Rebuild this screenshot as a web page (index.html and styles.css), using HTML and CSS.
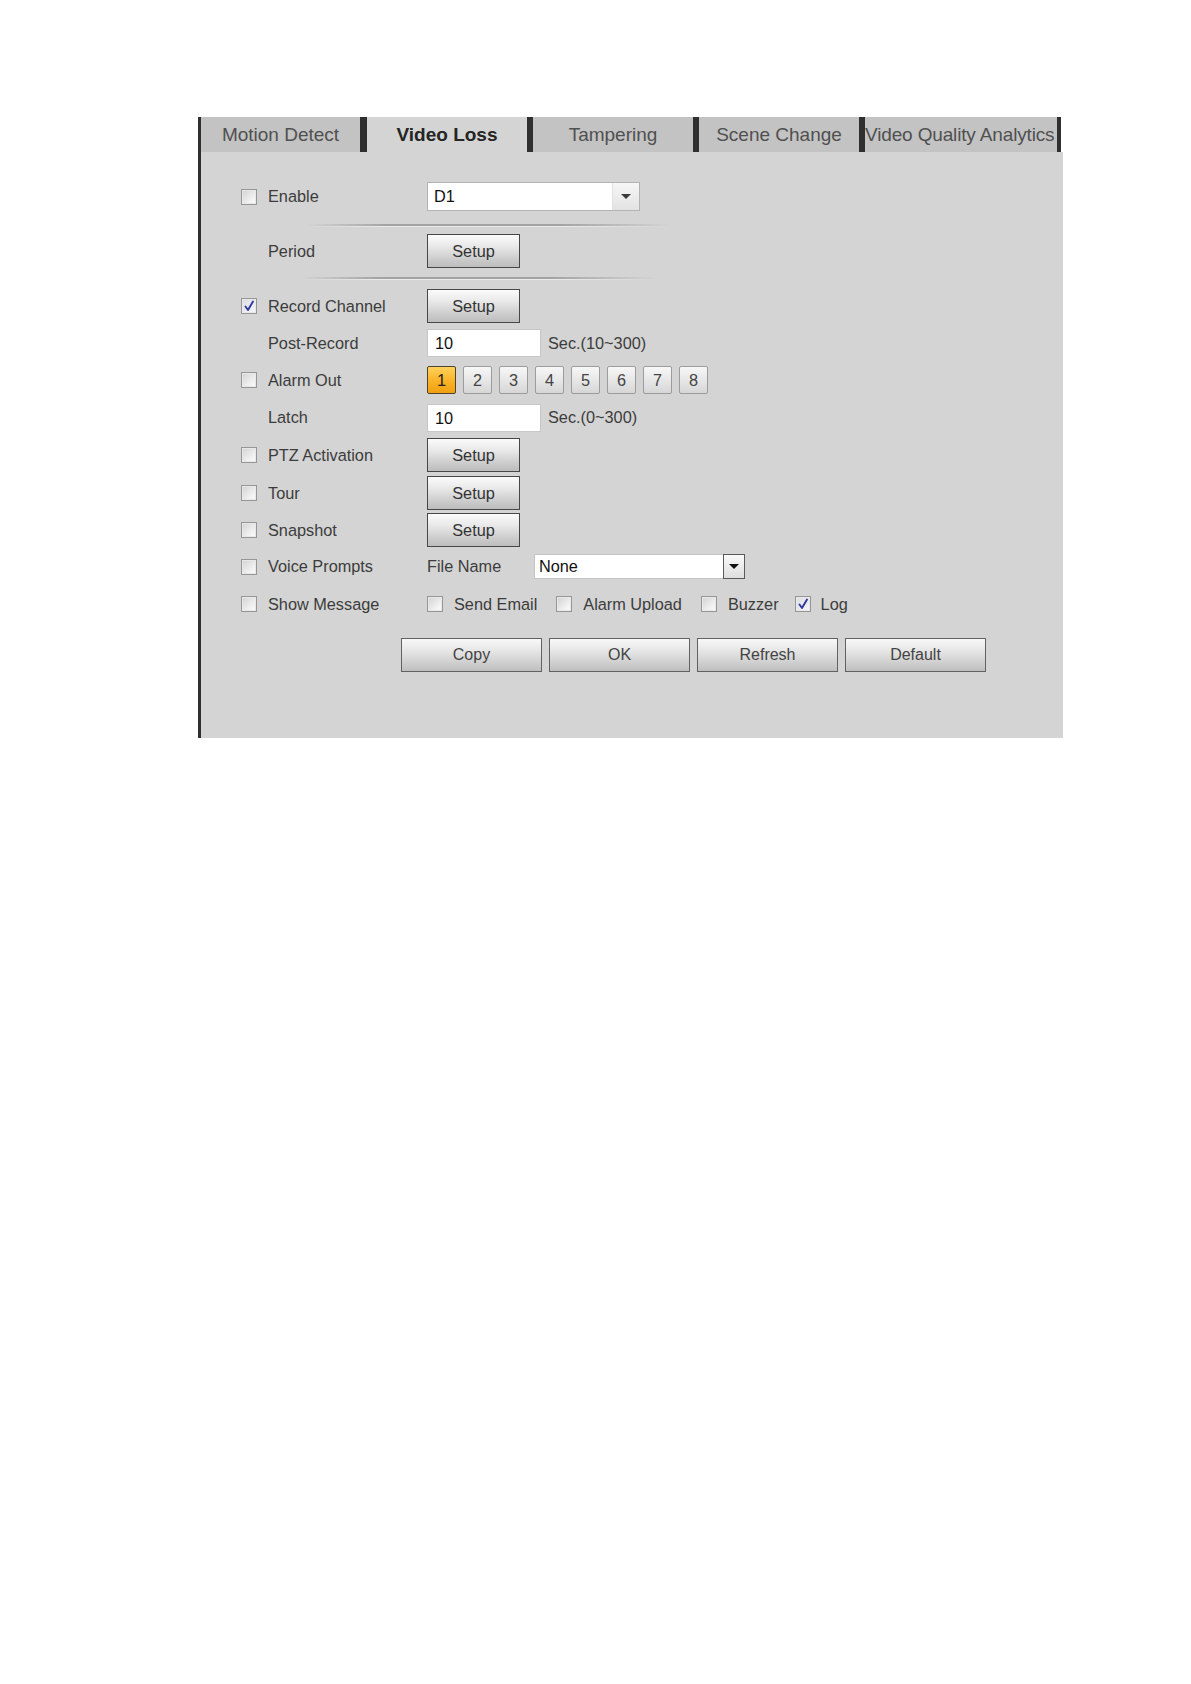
FILE: index.html
```html
<!DOCTYPE html>
<html>
<head>
<meta charset="utf-8">
<link rel="stylesheet" href="styles.css">
</head>
<body>
<div class="window">
  <div class="tabs">
    <div class="tab first">Motion Detect</div>
    <div class="tab active">Video Loss</div>
    <div class="tab">Tampering</div>
    <div class="tab">Scene Change</div>
    <div class="tab last">Video Quality Analytics</div>
  </div>
  <div class="panel">
    <div class="row r-enable">
      <div class="chk-cell"><span class="chk"></span></div>
      <div class="label">Enable</div>
      <div class="select d1"><span class="sel-text">D1</span><span class="sel-arrow"><span class="tri"></span></span></div>
    </div>
    <div class="sep sep1"></div>
    <div class="row r-btn">
      <div class="chk-cell"></div>
      <div class="label">Period</div>
      <button class="setup">Setup</button>
    </div>
    <div class="sep sep2"></div>
    <div class="row r-btn">
      <div class="chk-cell"><span class="chk checked"><svg viewBox="0 0 14 14" width="14" height="14"><path d="M3.5 7.5 L6 11 L11 2.5" fill="none" stroke="#2e3a9e" stroke-width="1.9" stroke-linecap="round" stroke-linejoin="round"/></svg></span></div>
      <div class="label">Record Channel</div>
      <button class="setup">Setup</button>
    </div>
    <div class="row r-post">
      <div class="chk-cell"></div>
      <div class="label">Post-Record</div>
      <div class="input">10</div>
      <span class="hint">Sec.(10~300)</span>
    </div>
    <div class="row r-alarm">
      <div class="chk-cell"><span class="chk"></span></div>
      <div class="label">Alarm Out</div>
      <div class="nums">
        <span class="num on">1</span>
        <span class="num">2</span>
        <span class="num">3</span>
        <span class="num">4</span>
        <span class="num">5</span>
        <span class="num">6</span>
        <span class="num">7</span>
        <span class="num">8</span>
      </div>
    </div>
    <div class="row r-latch">
      <div class="chk-cell"></div>
      <div class="label">Latch</div>
      <div class="input">10</div>
      <span class="hint">Sec.(0~300)</span>
    </div>
    <div class="row r-btn">
      <div class="chk-cell"><span class="chk"></span></div>
      <div class="label">PTZ Activation</div>
      <button class="setup">Setup</button>
    </div>
    <div class="row r-btn r-tour">
      <div class="chk-cell"><span class="chk"></span></div>
      <div class="label">Tour</div>
      <button class="setup">Setup</button>
    </div>
    <div class="row r-btn r-snap">
      <div class="chk-cell"><span class="chk"></span></div>
      <div class="label">Snapshot</div>
      <button class="setup">Setup</button>
    </div>
    <div class="row r-voice">
      <div class="chk-cell"><span class="chk"></span></div>
      <div class="label">Voice Prompts</div>
      <span class="fname">File Name</span>
      <div class="select none"><span class="sel-text">None</span><span class="sel-arrow dark"><span class="tri"></span></span></div>
    </div>
    <div class="row r-show">
      <div class="chk-cell"><span class="chk"></span></div>
      <div class="label">Show Message</div>
      <div class="opts">
        <span class="opt"><span class="chk"></span>Send Email</span>
        <span class="opt"><span class="chk"></span>Alarm Upload</span>
        <span class="opt"><span class="chk"></span>Buzzer</span>
        <span class="opt"><span class="chk checked"><svg viewBox="0 0 14 14" width="14" height="14"><path d="M3.5 7.5 L6 11 L11 2.5" fill="none" stroke="#2e3a9e" stroke-width="1.9" stroke-linecap="round" stroke-linejoin="round"/></svg></span>Log</span>
      </div>
    </div>
    <div class="actions">
      <button class="act">Copy</button>
      <button class="act">OK</button>
      <button class="act">Refresh</button>
      <button class="act">Default</button>
    </div>
  </div>
</div>
</body>
</html>
```

FILE: styles.css
```css
* { box-sizing: border-box; }
html, body { margin: 0; padding: 0; background: #ffffff; }
body {
  font-family: "Liberation Sans", Arial, sans-serif;
  color: #3c3c3c;
  height: 1684px;
}
.window {
  margin: 117px 0 0 198px;
  width: 865px;
}
.tabs {
  display: flex;
  height: 35px;
  border-left: 3px solid #2f2f2f;
}
.tab {
  width: 166px;
  height: 35px;
  line-height: 35px;
  text-align: center;
  font-size: 19px;
  color: #505050;
  background: #c3c3c3;
  border-left: 6px solid #2f2f2f;
  white-space: nowrap;
  overflow: hidden;
}
.tab.first { width: 159px; border-left: none; }
.tab.active {
  width: 167px;
  border-left-width: 7px;
  background: #d4d4d4;
  color: #252525;
  font-weight: bold;
}
.tab.last {
  width: 202px;
  border-right: 4px solid #2f2f2f;
  text-align: left;
  padding-left: 0;
  letter-spacing: -0.15px;
}
.panel {
  background: #d4d4d4;
  border-left: 3px solid #2f2f2f;
  height: 586px;
  padding-top: 30px;
  font-size: 16.3px;
}
.row {
  display: flex;
  align-items: center;
}
.chk-cell {
  width: 66px;
  padding-left: 40px;
  display: flex;
  align-items: center;
}
.label {
  width: 160px;
  padding-left: 1px;
  color: #3c3c3c;
  white-space: nowrap;
}
.chk {
  display: inline-flex;
  align-items: center;
  justify-content: center;
  width: 16px;
  height: 16px;
  border: 1px solid #969696;
  background: linear-gradient(135deg, #d2d2d2, #f2f2f2 70%, #fbfbfb);
  box-shadow: inset 0 0 0 1px #e8e8e8;
  flex: none;
}
.chk.checked { background: linear-gradient(135deg, #dcdce4, #f6f6fa); }
.chk svg { display: block; }

.r-enable { height: 29px; }
.select {
  display: flex;
  background: #ffffff;
  border: 1px solid #b3b3b3;
  color: #111;
}
.select.d1 { width: 213px; height: 29px; }
.sel-text { flex: 1; padding-left: 6px; line-height: 27px; }
.sel-arrow {
  width: 27px;
  border-left: 1px solid #e2e2e2;
  background: linear-gradient(#f6f6f6, #e3e3e3);
  display: flex;
  align-items: center;
  justify-content: center;
}
.tri {
  width: 0;
  height: 0;
  border-left: 5px solid transparent;
  border-right: 5px solid transparent;
  border-top: 5px solid #3a3a3a;
}
.sel-arrow.dark {
  width: 22px;
  border: 1px solid #5a5a5a;
  margin: -1px -1px -1px 0;
  background: linear-gradient(#fafafa, #dedede);
}
.sel-arrow.dark .tri { border-top-color: #111; }

.sep {
  margin-left: 106px;
  width: 363px;
  height: 3px;
  background:
    linear-gradient(to right, rgba(212,212,212,0), #a3a3a3 22%, #a3a3a3 70%, rgba(212,212,212,0)) top / 100% 2px no-repeat,
    linear-gradient(to right, rgba(212,212,212,0), #ebebeb 22%, #ebebeb 70%, rgba(212,212,212,0)) bottom / 100% 1px no-repeat;
}
.sep1 { margin-top: 13px; margin-bottom: 7px; }
.sep2 { margin-top: 9px; margin-bottom: 9px; width: 356px; margin-left: 100px; }

.r-btn { height: 34px; }
.setup {
  width: 93px;
  height: 34px;
  border: 1px solid #474747;
  background: linear-gradient(#fbfbfb, #e9e9e9 35%, #c9c9c9 80%, #bdbdbd);
  font-family: "Liberation Sans", Arial, sans-serif;
  font-size: 16.3px;
  color: #333;
  padding: 0;
  margin: 0;
  border-radius: 0;
}
.r-post { height: 40px; }
.input {
  width: 114px;
  height: 28px;
  background: #fff;
  border: 1px solid #c7c7c7;
  padding-left: 7px;
  line-height: 27px;
  color: #111;
}
.hint { margin-left: 7px; color: #3c3c3c; }
.r-alarm { height: 34px; }
.nums { display: flex; gap: 7px; }
.num {
  width: 29px;
  height: 28px;
  border: 1px solid #9c9c9c;
  border-radius: 2px;
  background: linear-gradient(#f7f7f7, #e4e4e4 60%, #d6d6d6);
  display: flex;
  align-items: center;
  justify-content: center;
  color: #444;
}
.num.on {
  border-color: #4e4330;
  background: linear-gradient(#ffd25a, #fbb52a 50%, #f0a010);
  color: #222;
}
.r-latch { height: 41px; }
.r-tour { margin-top: 4px; }
.r-snap { margin-top: 3px; }
.r-voice { height: 39px; }
.fname { width: 107px; color: #3c3c3c; }
.select.none { width: 211px; height: 25px; border-color: #c4c4c4; }
.select.none .sel-text { padding-left: 4px; line-height: 23px; }
.r-show { height: 36px; }
.opts { display: flex; align-items: center; }
.opt { display: inline-flex; align-items: center; margin-right: 19px; color: #3c3c3c; white-space: nowrap; }
.opt:nth-child(3) { margin-right: 16px; }
.opt .chk { margin-right: 11px; }
.opt:last-child .chk { margin-right: 10px; }
.actions {
  display: flex;
  gap: 7px;
  margin-top: 16px;
  padding-left: 200px;
}
.act {
  width: 141px;
  height: 34px;
  border: 1px solid #626262;
  background: linear-gradient(#f8f8f8, #e4e4e4 40%, #c8c8c8 85%, #bfbfbf);
  font-family: "Liberation Sans", Arial, sans-serif;
  font-size: 16px;
  color: #444;
  padding: 0;
  margin: 0;
  border-radius: 0;
}
```
